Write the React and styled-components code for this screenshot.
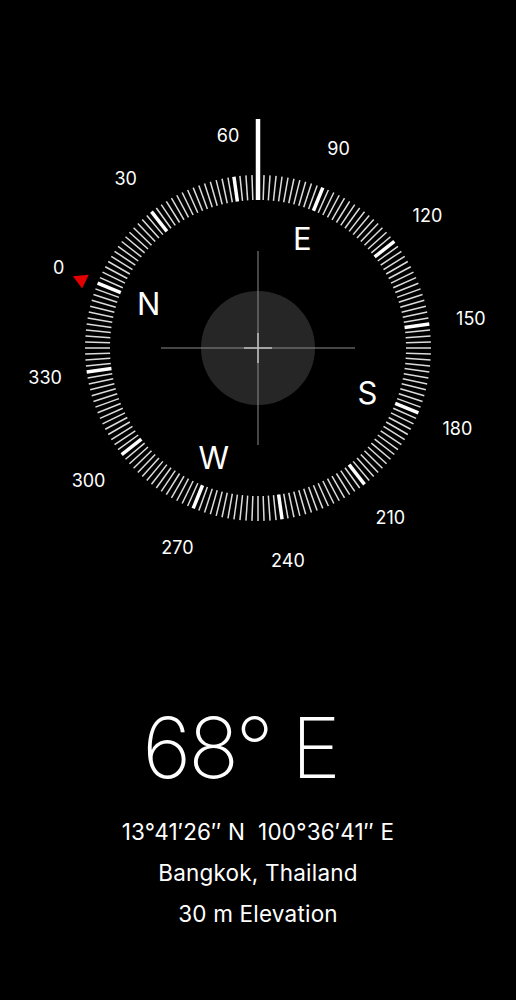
import React from 'react'
import styled, { createGlobalStyle } from 'styled-components'

const HEADING = 68
const CX = 258
const CY = 240

const GlobalStyle = createGlobalStyle`
  html, body {
    margin: 0;
    background: #000;
  }
  body {
    font-family: Inter, 'Noto Sans', sans-serif;
    color: #fff;
  }
`

const Page = styled.div`
  width: 516px;
  height: 1000px;
  display: flex;
  flex-direction: column;
  align-items: center;
  padding-top: 108px;
  box-sizing: border-box;
  background: #000;
`

const Dial = styled.svg`
  display: block;
  flex-shrink: 0;
`

const DegreeLabel = styled.text`
  font-family: Inter, sans-serif;
  font-size: 18px;
  fill: #fff;
`

const CardinalLabel = styled.text`
  font-family: Inter, sans-serif;
  font-size: 31px;
  fill: #fff;
`

const Heading = styled.div`
  margin-top: 110px;
  margin-right: 36px;
  font-family: Inter, sans-serif;
  font-weight: 200;
  font-size: 84px;
  line-height: 100px;
  letter-spacing: -3px;
`

const InfoLine = styled.div`
  font-family: Inter, sans-serif;
  font-size: 22.5px;
  line-height: 41px;
  letter-spacing: 0.2px;
  white-space: pre;
`

const Coords = styled(InfoLine)`
  margin-top: 13px;
`

// clockwise angle from top, in the rotated dial
const polar = (deg, r) => {
  const a = ((deg - HEADING) * Math.PI) / 180
  return [CX + r * Math.sin(a), CY - r * Math.cos(a)]
}

const ticks = Array.from({ length: 180 }, (_, i) => i * 2)
const numbers = Array.from({ length: 12 }, (_, i) => i * 30)
const cardinals = [
  { deg: 0, label: 'N' },
  { deg: 90, label: 'E' },
  { deg: 180, label: 'S' },
  { deg: 270, label: 'W' },
]

function Compass() {
  return (
    <Dial width="516" height="480" viewBox="0 0 516 480">
      <circle cx={CX} cy={CY} r="57" fill="#262626" />
      {ticks.map(d => {
        const [x1, y1] = polar(d, 148)
        const [x2, y2] = polar(d, 173)
        const major = d % 30 === 0
        return (
          <line
            key={d}
            x1={x1}
            y1={y1}
            x2={x2}
            y2={y2}
            stroke={major ? '#fff' : '#dcdcdc'}
            strokeWidth={major ? 3.5 : 1.5}
          />
        )
      })}
      {numbers.map(d => {
        const [x, y] = polar(d, 215)
        return (
          <DegreeLabel
            key={d}
            x={x}
            y={y}
            textAnchor="middle"
            dominantBaseline="central"
          >
            {d}
          </DegreeLabel>
        )
      })}
      {cardinals.map(c => {
        const [x, y] = polar(c.deg, 118)
        return (
          <CardinalLabel
            key={c.label}
            x={x}
            y={y}
            textAnchor="middle"
            dominantBaseline="central"
          >
            {c.label}
          </CardinalLabel>
        )
      })}
      {/* crosshair */}
      <line x1={CX - 97} y1={CY} x2={CX + 97} y2={CY} stroke="#8c8c8c" strokeWidth="1" />
      <line x1={CX} y1={CY - 97} x2={CX} y2={CY + 97} stroke="#8c8c8c" strokeWidth="1" />
      <line x1={CX - 14} y1={CY} x2={CX + 14} y2={CY} stroke="#bdbdbd" strokeWidth="1.5" />
      <line x1={CX} y1={CY - 15} x2={CX} y2={CY + 15} stroke="#bdbdbd" strokeWidth="1.5" />
      {/* heading marker */}
      <line x1={CX} y1={CY - 229} x2={CX} y2={CY - 148} stroke="#fff" strokeWidth="4.5" />
      {/* north marker */}
      <polygon
        points="-8,-6.5 8,-6.5 0,6.5"
        fill="#e30000"
        transform="translate(81.5 174) rotate(-6)"
      />
    </Dial>
  )
}

export default function App() {
  return (
    <Page>
      <GlobalStyle />
      <Compass />
      <Heading>68° E</Heading>
      <Coords>{'13°41′26″ N  100°36′41″ E'}</Coords>
      <InfoLine>Bangkok, Thailand</InfoLine>
      <InfoLine>30 m Elevation</InfoLine>
    </Page>
  )
}
